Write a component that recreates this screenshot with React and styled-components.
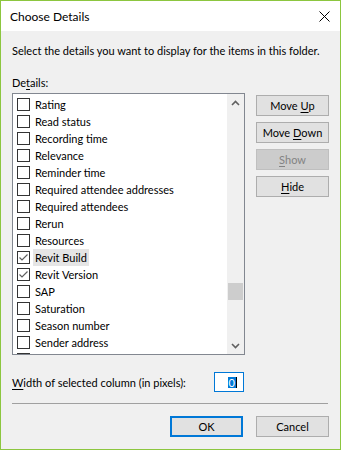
import React from "react";
import styled, { createGlobalStyle } from "styled-components";

const GlobalStyle = createGlobalStyle`
  html, body {
    margin: 0;
    padding: 0;
    background: #f0f0f0;
  }
  * {
    box-sizing: border-box;
  }
`;

const Window = styled.div`
  width: 341px;
  height: 450px;
  border: 1px solid #8cc63f;
  background: #f0f0f0;
  font-family: Lato, "Noto Sans", sans-serif;
  font-size: 11px;
  color: #000;
  display: flex;
  flex-direction: column;
`;

const TitleBar = styled.div`
  height: 30px;
  background: #fff;
  display: flex;
  align-items: center;
  justify-content: space-between;
  padding: 0 10px 0 9px;
  flex-shrink: 0;
`;

const Title = styled.div`
  font-size: 12px;
  line-height: 15px;
`;

const Body = styled.div`
  padding: 0 11px;
  display: flex;
  flex-direction: column;
`;

const Text = styled.div`
  line-height: 15px;
  margin-top: ${(p) => p.mt || 0}px;
  white-space: nowrap;
`;

const Key = styled.span`
  text-decoration: underline;
  text-underline-offset: 2px;
`;

const MainRow = styled.div`
  display: flex;
  gap: 11px;
  margin-top: 3px;
`;

const ListBox = styled.div`
  width: 233px;
  height: 262px;
  border: 1px solid #828790;
  background: #fff;
  display: flex;
  overflow: hidden;
`;

const Items = styled.div`
  flex: 1;
  padding: 2px 0 0 4px;
  display: flex;
  flex-direction: column;
`;

const Row = styled.div`
  height: 17px;
  flex-shrink: 0;
  display: flex;
  align-items: center;
`;

const Box = styled.span`
  width: 13px;
  height: 13px;
  border: 1px solid #333;
  background: #fff;
  display: flex;
  align-items: center;
  justify-content: center;
  flex-shrink: 0;
`;

const Label = styled.span`
  margin-left: 3px;
  padding: 0 2px;
  height: 17px;
  line-height: 17px;
  white-space: nowrap;
  background: ${(p) => (p.selected ? "#e5e5e5" : "transparent")};
`;

const ScrollBar = styled.div`
  width: 17px;
  background: #f0f0f0;
  display: flex;
  flex-direction: column;
  align-items: center;
  flex-shrink: 0;
`;

const Arrow = styled.div`
  height: 17px;
  width: 17px;
  display: flex;
  align-items: center;
  justify-content: center;
  flex-shrink: 0;
`;

const Track = styled.div`
  flex: 1;
  width: 100%;
  padding: 0 1px;
  display: flex;
  flex-direction: column;
`;

const Thumb = styled.div`
  margin-top: 172px;
  height: 17px;
  background: #cdcdcd;
`;

const ButtonColumn = styled.div`
  display: flex;
  flex-direction: column;
  gap: 6px;
  padding-top: 2px;
`;

const Button = styled.div`
  width: 73px;
  height: 21px;
  display: flex;
  align-items: center;
  justify-content: center;
  background: ${(p) => (p.disabled ? "#cccccc" : "#e1e1e1")};
  border: ${(p) => (p.primary ? "2px solid #0078d7" : p.disabled ? "1px solid #bfbfbf" : "1px solid #adadad")};
  color: ${(p) => (p.disabled ? "#838383" : "#000")};
  line-height: 15px;
  white-space: nowrap;
`;

const WidthRow = styled.div`
  width: 233px;
  display: flex;
  align-items: center;
  height: 20px;
  margin-top: 17px;
`;

const WidthInput = styled.div`
  margin-left: auto;
  margin-right: 1px;
  width: 30px;
  height: 20px;
  border: 1px solid #0078d7;
  background: #fff;
  display: flex;
  align-items: center;
  justify-content: flex-end;
  padding-right: 6px;
`;

const Selected = styled.span`
  background: #0078d7;
  color: #fff;
  line-height: 11px;
  padding: 0 1px;
  border-right: 1px solid #000;
`;

const Separator = styled.div`
  margin-top: 11px;
  margin-right: 1px;
  height: 1px;
  background: #a0a0a0;
`;

const Footer = styled.div`
  display: flex;
  justify-content: flex-end;
  gap: 13px;
  margin-top: 12px;
`;

const CheckMark = () => (
  <svg width="11" height="11" viewBox="0 0 11 11">
    <path d="M1.5 5.5 L4 8 L9.5 2.5" fill="none" stroke="#5f5f5f" strokeWidth="1.2" />
  </svg>
);

const Chevron = ({ up }) => (
  <svg width="9" height="6" viewBox="0 0 9 6">
    <path
      d={up ? "M1 5 L4.5 1.5 L8 5" : "M1 1 L4.5 4.5 L8 1"}
      fill="none"
      stroke="#606060"
      strokeWidth="1.6"
    />
  </svg>
);

const CloseIcon = () => (
  <svg width="11" height="11" viewBox="0 0 11 11">
    <path d="M0.5 0.5 L10.5 10.5 M10.5 0.5 L0.5 10.5" stroke="#000" strokeWidth="1" />
  </svg>
);

const details = [
  { name: "Rating" },
  { name: "Read status" },
  { name: "Recording time" },
  { name: "Relevance" },
  { name: "Reminder time" },
  { name: "Required attendee addresses" },
  { name: "Required attendees" },
  { name: "Rerun" },
  { name: "Resources" },
  { name: "Revit Build", checked: true, selected: true },
  { name: "Revit Version", checked: true },
  { name: "SAP" },
  { name: "Saturation" },
  { name: "Season number" },
  { name: "Sender address" },
  { name: "Sender name" },
];

export default function App() {
  return (
    <>
      <GlobalStyle />
      <Window>
        <TitleBar>
          <Title>Choose Details</Title>
          <CloseIcon />
        </TitleBar>
        <Body>
          <Text mt={12}>Select the details you want to display for the items in this folder.</Text>
          <Text mt={17}>
            De<Key>t</Key>ails:
          </Text>
          <MainRow>
            <ListBox>
              <Items>
                {details.map((d) => (
                  <Row key={d.name}>
                    <Box>{d.checked && <CheckMark />}</Box>
                    <Label selected={d.selected}>{d.name}</Label>
                  </Row>
                ))}
              </Items>
              <ScrollBar>
                <Arrow>
                  <Chevron up />
                </Arrow>
                <Track>
                  <Thumb />
                </Track>
                <Arrow>
                  <Chevron />
                </Arrow>
              </ScrollBar>
            </ListBox>
            <ButtonColumn>
              <Button>
                Move&nbsp;<Key>U</Key>p
              </Button>
              <Button>
                Move&nbsp;<Key>D</Key>own
              </Button>
              <Button disabled>
                <Key>S</Key>how
              </Button>
              <Button>
                <Key>H</Key>ide
              </Button>
            </ButtonColumn>
          </MainRow>
          <WidthRow>
            <Text>
              <Key>W</Key>idth of selected column (in pixels):
            </Text>
            <WidthInput>
              <Selected>0</Selected>
            </WidthInput>
          </WidthRow>
          <Separator />
          <Footer>
            <Button primary>OK</Button>
            <Button>Cancel</Button>
          </Footer>
        </Body>
      </Window>
    </>
  );
}
